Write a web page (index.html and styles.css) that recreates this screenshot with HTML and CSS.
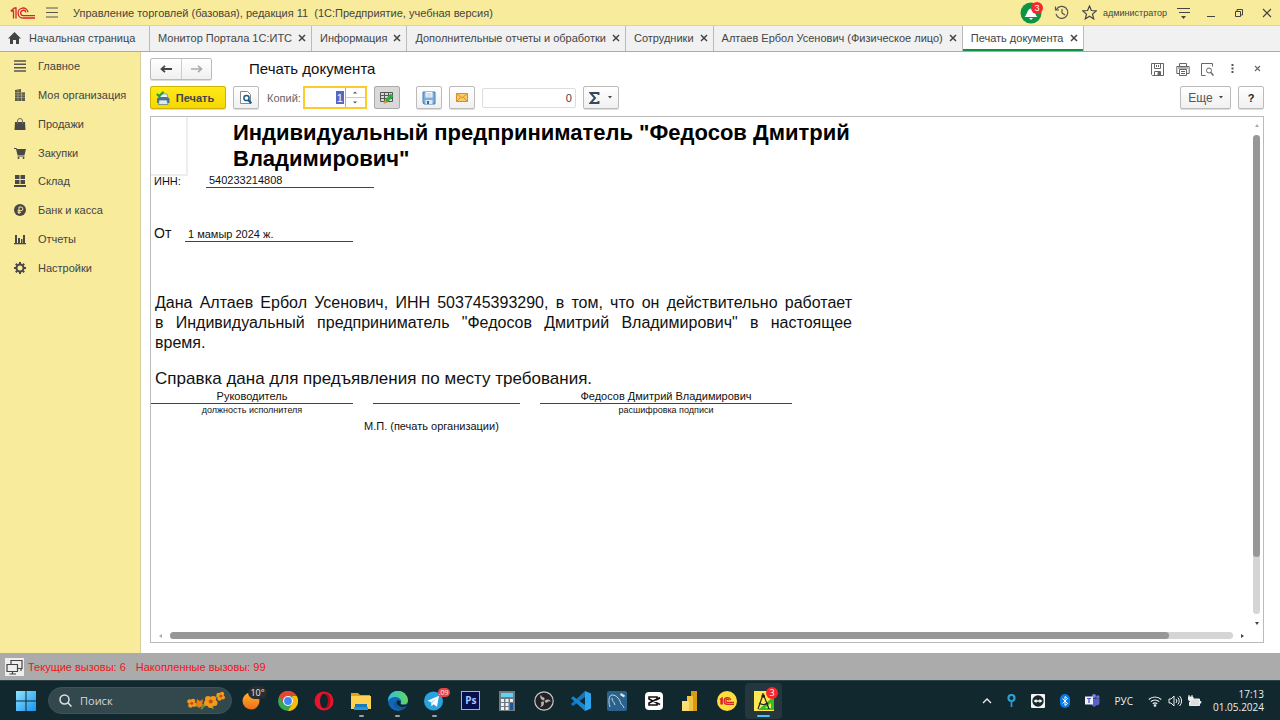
FILE: index.html
```html
<!DOCTYPE html>
<html lang="ru">
<head>
<meta charset="utf-8">
<title>Печать документа</title>
<link rel="stylesheet" href="styles.css">
</head>
<body>
<div class="screen">
  <header class="titlebar">
    <svg class="logo" width="26" height="14" viewBox="0 0 26 14" fill="none" stroke="#d8232a" stroke-width="1.300"><path d="M.8 5 4.500 2H6v10.500M.8 5H3.500v7.500"/><path d="M18 6.200A5 5 0 1 0 13.500 12H25"/><path d="M16 6.400A2.700 2.700 0 1 0 13.500 9.700H25"/></svg>
    <button class="plain burger" aria-label="Меню"><svg width="12" height="11" viewBox="0 0 12 11" stroke="#555" stroke-width="1.200"><path d="M0 1h12M0 5.500h12M0 10h12"/></svg></button>
    <span class="app-name">Управление торговлей (базовая), редакция 11&nbsp; (1С:Предприятие, учебная версия)</span>
    <div class="title-tools">
      <button class="plain bell" aria-label="Оповещения"><svg width="22" height="22" viewBox="0 0 22 22"><circle cx="11" cy="11" r="10.500" fill="#0b9444"/><path d="M4.500 15c2.500-1.500 2.500-8 6.500-8.500 4 .5 4 7 6.500 8.500zM9 16h4l-2 2z" fill="#fff"/></svg><span class="badge">3</span></button>
      <button class="plain" aria-label="История"><svg width="15" height="15" viewBox="0 0 15 15" fill="none" stroke="#555" stroke-width="1.200"><path d="M2.500 4.500A6 6 0 1 1 2 9M1.500 1.500v3.500H5M8 4v4l3 2"/></svg></button>
      <button class="plain" aria-label="Избранное"><svg width="15" height="15" viewBox="0 0 15 15" fill="none" stroke="#444" stroke-width="1.200"><path d="m7.500 1 1.900 4.500 4.800.4-3.700 3.200 1.200 4.800-4.200-2.600-4.200 2.600 1.200-4.800L.8 5.900l4.800-.4z"/></svg></button>
      <span class="user">администратор</span>
      <button class="plain" aria-label="Настройки"><svg width="13" height="12" viewBox="0 0 13 12"><path d="M0 1.500h13M2 5.500h11" stroke="#444" stroke-width="1.200"/><path d="M4 9h5l-2.500 3z" fill="#444"/></svg></button>
      <button class="plain" aria-label="Свернуть"><svg width="12" height="12" viewBox="0 0 12 12" stroke="#444"><path d="M2 9.500h8"/></svg></button>
      <button class="plain" aria-label="Развернуть"><svg width="10" height="10" viewBox="0 0 10 10" fill="none" stroke="#444"><path d="M1.500 3.500h5v5h-5zM3 3V1.500h5.500V7H7"/></svg></button>
      <button class="plain" aria-label="Закрыть"><svg width="10" height="10" viewBox="0 0 10 10" stroke="#444" stroke-width="1.100"><path d="m1 1 8 8M9 1 1 9"/></svg></button>
    </div>
  </header>

  <nav class="tabs">
    <a class="tab home" href="#"><svg width="13" height="12" viewBox="0 0 13 12" fill="#444"><path d="M6.500 0 13 6.500h-2V12H8V8H5v4H2V6.500H0z"/></svg>Начальная страница</a>
    <a class="tab" href="#">Монитор Портала 1С:ИТС<svg class="x" viewBox="0 0 8 8"><path d="m1 1 6 6M7 1 1 7"/></svg></a>
    <a class="tab" href="#">Информация<svg class="x" viewBox="0 0 8 8"><path d="m1 1 6 6M7 1 1 7"/></svg></a>
    <a class="tab" href="#">Дополнительные отчеты и обработки<svg class="x" viewBox="0 0 8 8"><path d="m1 1 6 6M7 1 1 7"/></svg></a>
    <a class="tab" href="#">Сотрудники<svg class="x" viewBox="0 0 8 8"><path d="m1 1 6 6M7 1 1 7"/></svg></a>
    <a class="tab" href="#">Алтаев Ербол Усенович (Физическое лицо)<svg class="x" viewBox="0 0 8 8"><path d="m1 1 6 6M7 1 1 7"/></svg></a>
    <a class="tab active" href="#">Печать документа<svg class="x" viewBox="0 0 8 8"><path d="m1 1 6 6M7 1 1 7"/></svg></a>
  </nav>

  <div class="work">
    <nav class="sidebar">
      <ul class="sections">
        <li><a href="#"><svg viewBox="0 0 12 12" stroke="#555" stroke-width="1.500"><path d="M0 1h12M0 4.300h12M0 7.700h12M0 11h12"/></svg>Главное</a></li>
        <li><a href="#"><svg viewBox="0 0 12 12"><path d="M1 1l6-1v12H1zM7.500 3H11v9H7.500z" fill="#5d5a4c"/><path d="M1 3.500h10M1 6h10M1 8.500h10M4 1v11" stroke="#b5ac7c" stroke-width=".6"/></svg>Моя организация</a></li>
        <li><a href="#"><svg viewBox="0 0 12 12"><path d="M1 4h10l.5 8H.5z" fill="#484848"/><path d="M3.500 6V3a2.500 2.500 0 0 1 5 0v3" fill="none" stroke="#6d6a5c"/></svg>Продажи</a></li>
        <li><a href="#"><svg viewBox="0 0 12 12"><path d="M0 1h2.500l.5 1h9l-1.500 6H3.500L2 2H0z" fill="#484848"/><path d="M3.500 9h7" stroke="#484848"/><circle cx="4.500" cy="11" r="1" fill="#484848"/><circle cx="9.500" cy="11" r="1" fill="#484848"/></svg>Закупки</a></li>
        <li><a href="#"><svg viewBox="0 0 12 12" fill="#484848"><path d="M1 0h4.500v4H1zM6.500 0H11v4H6.500zM1 5h4.500v4H1zM6.500 5H11v4H6.500zM0 10h12v2H0z"/></svg>Склад</a></li>
        <li><a href="#"><svg viewBox="0 0 12 12"><circle cx="6" cy="6" r="6" fill="#484848"/><path d="M5 10V3h2a1.800 1.800 0 0 1 0 3.700H3.500M3.500 8.300H7" fill="none" stroke="#f9eb9c"/></svg>Банк и касса</a></li>
        <li><a href="#"><svg viewBox="0 0 12 12" fill="#484848"><path d="M1 2h2v8H1zM4 5h2v5H4zM7 6h1.500v4H7zM9 2h2v8H9zM0 10h12v1.200H0z"/></svg>Отчеты</a></li>
        <li><a href="#"><svg viewBox="0 0 12 12" fill="none" stroke="#484848"><circle cx="6" cy="6" r="3.500" stroke-width="2"/><path d="M6 0v2M6 10v2M0 6h2M10 6h2M1.800 1.800l1.400 1.400M8.800 8.800l1.400 1.400M1.800 10.200l1.400-1.400M8.800 3.200l1.400-1.400" stroke-width="2"/></svg>Настройки</a></li>
      </ul>
    </nav>

    <main class="content">
      <div class="form-head">
        <div class="history">
          <button aria-label="Назад"><svg width="12" height="8" viewBox="0 0 12 8" fill="none" stroke="#444" stroke-width="1.800"><path d="M12 4H2M5 .8 1.500 4 5 7.200"/></svg></button>
          <button aria-label="Вперед"><svg width="12" height="8" viewBox="0 0 12 8" fill="none" stroke="#aaa" stroke-width="1.600"><path d="M0 4h10M7 .8 10.500 4 7 7.200"/></svg></button>
        </div>
        <h1>Печать документа</h1>
        <div class="head-tools">
          <button class="plain" aria-label="Сохранить"><svg width="13" height="13" viewBox="0 0 13 13" fill="none" stroke="#666"><path d="M.5.5h12v12h-11l-1-1zM3.500.5v5h6v-5M3.500 12.500v-4h6v4M5.500 2v2M7.500 2v2"/><path d="M7 9.500h2V12H7z" fill="#666"/></svg></button>
          <button class="plain" aria-label="Печать"><svg width="14" height="13" viewBox="0 0 14 13" fill="none" stroke="#666"><path d="M3.500 3.500v-3h7v3M3 10.500H.8v-7h12.400v7H11M3.500 6.500h7v6h-7zM5 8.500h4M5 10.500h4M2 5h10"/></svg></button>
          <button class="plain" aria-label="Просмотр"><svg width="13" height="13" viewBox="0 0 13 13" fill="none" stroke="#666"><path d="M4.500 12.500h-4V.5h11v3"/><circle cx="8" cy="7.500" r="2.500"/><path d="m9.800 9.500 2.700 3" stroke-width="1.500"/></svg></button>
          <button class="plain" aria-label="Еще"><svg width="13" height="13" viewBox="0 0 13 13" fill="#555"><path d="M5.500 1h2v2h-2zM5.500 4.500h2v2h-2zM5.500 8h2v2h-2z"/></svg></button>
          <button class="plain" aria-label="Закрыть"><svg width="13" height="13" viewBox="0 0 13 13" stroke="#666" stroke-width="1.200"><path d="m4 3 5 5M9 3 4 8"/></svg></button>
        </div>
      </div>

      <div class="toolbar">
        <button class="btn print"><svg width="14" height="14" viewBox="0 0 14 14"><path d="M4 3h7l1 4H3z" fill="#e8f1f8" stroke="#5b86a8" stroke-width=".7"/><path d="M1 7.500 3 6h8l2.500 1.500V12H1z" fill="#4c7396"/><path d="M3 9h8l1 4.500H2.500z" fill="#dbe9f3" stroke="#426685" stroke-width=".6"/><path d="m.8 3 2.500 2.300L7.500.8" fill="none" stroke="#29a22e" stroke-width="2.200"/></svg>Печать</button>
        <button class="btn square" aria-label="Просмотр"><svg width="12" height="13" viewBox="0 0 12 13" fill="none"><path d="M.5.5h7l3 3v9H.5z" stroke="#888" fill="#fff"/><circle cx="6.500" cy="7" r="2.600" stroke="#155a86" stroke-width="1.500"/><path d="m8.300 9 3 3.300" stroke="#155a86" stroke-width="2"/></svg></button>
        <label class="copies-label" for="copies">Копий:</label>
        <div class="copies">
          <input id="copies" type="text" inputmode="numeric" value="1">
          <div class="spin">
            <button aria-label="Больше"><svg width="4" height="3" viewBox="0 0 4 3" fill="#555"><path d="M0 2.500h4L2 .5z"/></svg></button>
            <button aria-label="Меньше"><svg width="4" height="3" viewBox="0 0 4 3" fill="#555"><path d="M0 .5h4l-2 2z"/></svg></button>
          </div>
        </div>
        <button class="btn square pressed" aria-label="Редактирование"><svg width="14" height="13" viewBox="0 0 14 13" fill="none"><path d="M.5 1.500h12v9H.5zM.5 4.500h12M.5 7.500h12M4.500 1.500v9M8.500 1.500v9" stroke="#555"/><path d="M5 9 10.500 2.500l3 2.500-6 6.500z" fill="#35a847"/><path d="m5 9 2.500 2.500-4 1.500z" fill="#e89538"/></svg></button>
        <button class="btn square gap-left" aria-label="Сохранить"><svg width="14" height="14" viewBox="0 0 14 14"><path d="M1 1h12v12H2l-1-1z" fill="#7baee0" stroke="#4b7eb4"/><path d="M3.500 1h7v5.500h-7z" fill="#f5f9fd"/><path d="M4.500 3h5M4.500 5h5" stroke="#9bb3ca" stroke-width=".7"/><path d="M3.500 9h7v4h-7z" fill="#dce7f0"/><path d="M5 10h2v3H5z" fill="#4b6783"/></svg></button>
        <button class="btn square" aria-label="Отправить"><svg width="12" height="9" viewBox="0 0 12 9"><path d="M.5.5h11v8H.5z" fill="#f8ca68" stroke="#d99021"/><path d="m.5.500 5.500 4.500L11.500.5M.5 8.500l4-4M11.500 8.500l-4-4" fill="none" stroke="#d99021"/></svg></button>
        <input class="total" type="text" value="0" readonly aria-label="Сумма">
        <button class="btn sum" aria-label="Сумма выделенных"><svg width="11" height="12" viewBox="0 0 11 12" fill="none" stroke="#34495e" stroke-width="1.900"><path d="M9.500 3V1H1.500l4.500 5-4.500 5h8V9"/></svg><svg width="4" height="3" viewBox="0 0 4 3" fill="#444"><path d="M0 0h4L2 2.500z"/></svg></button>
        <button class="btn more">Еще<svg width="4" height="3" viewBox="0 0 4 3" fill="#444"><path d="M0 0h4L2 2.500z"/></svg></button>
        <button class="btn square help">?</button>
      </div>

      <div class="viewer">
        <article class="sheet">
          <div class="sheet-head">
            <div class="stamp"></div>
            <h2>Индивидуальный предприниматель "Федосов Дмитрий<br>Владимирович"</h2>
          </div>
          <div class="line inn"><span class="key">ИНН:</span><span class="value">540233214808</span></div>
          <div class="line date"><span class="key">От</span><span class="value">1 мамыр 2024 ж.</span></div>
          <p class="body-text"><span class="full">Дана Алтаев Ербол Усенович, ИНН 503745393290, в том, что он действительно работает</span> <span class="full">в Индивидуальный предприниматель "Федосов Дмитрий Владимирович" в настоящее</span> время.</p>
          <p class="body-text closing">Справка дана для предъявления по месту требования.</p>
          <div class="signs">
            <div><p class="signed">Руководитель</p><small>должность исполнителя</small></div>
            <div><p class="signed"></p></div>
            <div><p class="signed">Федосов Дмитрий Владимирович</p><small>расшифровка подписи</small></div>
          </div>
          <p class="seal">М.П. (печать организации)</p>
        </article>
        <div class="scroll vertical">
          <svg width="4" height="3" viewBox="0 0 4 3" fill="#aaa"><path d="M0 3h4L2 0z"/></svg>
          <div class="track"><div class="thumb"></div></div>
          <svg width="4" height="3" viewBox="0 0 4 3" fill="#444"><path d="M0 0h4L2 3z"/></svg>
        </div>
        <div class="scroll horizontal">
          <svg width="3" height="4" viewBox="0 0 3 4" fill="#aaa"><path d="M3 0v4L0 2z"/></svg>
          <div class="track"><div class="thumb"></div></div>
          <svg width="3" height="4" viewBox="0 0 3 4" fill="#444"><path d="M0 0v4l3-2z"/></svg>
        </div>
      </div>
    </main>
  </div>

  <div class="status">
    <svg width="19" height="18" viewBox="0 0 19 18"><path d="M0 0h19v18H0z" fill="#eee"/><g fill="#eee" stroke="#444" stroke-width="1.200"><path d="M6 2.500h11v8H6zM16 13v-2"/><path d="M2 6.500h10.500v7H2zM7.500 13.500V16M4.500 16H11"/></g></svg>
    <span>Текущие вызовы: 6</span><span>Накопленные вызовы: 99</span>
  </div>

  <footer class="taskbar">
    <button class="plain start" aria-label="Пуск"><svg width="20" height="20" viewBox="0 0 20 20"><defs><linearGradient id="win" x2="1" y2="1"><stop stop-color="#8fe4ff"/><stop offset="1" stop-color="#1593ef"/></linearGradient></defs><path d="M0 0h9.500v9.500H0zM10.500 0H20v9.500h-9.500zM0 10.500h9.500V20H0zM10.500 10.500H20V20h-9.500z" fill="url(#win)"/></svg></button>
    <label class="search">
      <svg width="13" height="13" viewBox="0 0 13 13" fill="none" stroke="#dce2e4" stroke-width="1.500"><circle cx="5.500" cy="5.500" r="4.500"/><path d="m8.800 8.800 3.700 3.700"/></svg>
      <input type="text" placeholder="Поиск" aria-label="Поиск">
      <svg width="38" height="20" viewBox="0 0 38 20"><path d="M5 14c8 3 16-1 28-11M14 18l6-6M24 12l2 6" stroke="#6d8f3a" stroke-width="1.800" fill="none"/><g fill="#f39a1d"><circle cx="2.500" cy="10.500" r="2.300"/><circle cx="6" cy="10" r="2.300"/><circle cx="7" cy="13.500" r="2.300"/><circle cx="3.500" cy="14.500" r="2.300"/><path d="M10 8l3 2 3-2-1 7-3 2-3-3z" fill="#ec7d12"/><circle cx="21" cy="8" r="3"/><circle cx="26" cy="8" r="3"/><circle cx="27.500" cy="12" r="3"/><circle cx="23.500" cy="14" r="3"/><circle cx="20" cy="12" r="3"/><circle cx="31.500" cy="4" r="2.200"/><circle cx="35" cy="3" r="2.200"/><circle cx="36" cy="6.500" r="2"/><circle cx="32.500" cy="7.500" r="2.200"/></g><g fill="#c34c10"><circle cx="4.800" cy="12.200" r="1.500"/><circle cx="23.700" cy="10.500" r="2"/><circle cx="33.800" cy="5.200" r="1.400"/></g></svg>
    </label>
    <div class="apps">
      <button class="plain app" aria-label="Погода"><svg viewBox="0 0 20 20"><defs><linearGradient id="moon" y2="1" x2="0"><stop stop-color="#ffb32c"/><stop offset="1" stop-color="#ef6c19"/></linearGradient></defs><circle cx="10" cy="10" r="8.500" fill="url(#moon)"/></svg><span class="temp">10°</span></button>
      <button class="plain app" aria-label="Chrome"><svg viewBox="0 0 20 20"><circle cx="10" cy="10" r="10" fill="#34a853"/><path d="M1.300 5A10 10 0 0 1 18.700 5H10L5.700 12.500z" fill="#ea4335"/><path d="M18.700 5A10 10 0 0 1 10 20l4.300-7.500V5z" fill="#fbbc04"/><circle cx="10" cy="10" r="5" fill="#fff"/><circle cx="10" cy="10" r="3.900" fill="#4285f4"/></svg></button>
      <button class="plain app" aria-label="Opera"><svg viewBox="0 0 20 20"><circle cx="10" cy="10" r="9.500" fill="#e8142c"/><path d="M10 1a9.500 9.500 0 0 1 0 18c5-2 5-16 0-18" fill="#a60d20"/><ellipse cx="10" cy="10" rx="4" ry="7.300" fill="#10262c"/></svg></button>
      <button class="plain app open" aria-label="Проводник"><svg viewBox="0 0 20 20"><path d="M0 2h7l2 2h10v6H0z" fill="#dca31c"/><path d="M0 5h20v13H0z" fill="#ffd153"/><path d="M4 13h12v6H4z" fill="#167abc"/><path d="M3 16h14v3H3z" fill="#2497df"/></svg></button>
      <button class="plain app open" aria-label="Edge"><svg viewBox="0 0 20 20"><defs><linearGradient id="edge" x2="1"><stop stop-color="#30bde9"/><stop offset="1" stop-color="#61d957"/></linearGradient></defs><circle cx="10" cy="10" r="10" fill="#1167b3"/><path d="M0 10A10 10 0 0 1 20 9.500c0 3-3 4.500-6 4-2-.4-1-1.500-.8-3C13 5 3 4 0 10" fill="url(#edge)"/><path d="M8 10c-2 5 3 9 10 6-1 1-1.500 2-2.500 2.500C9 19 3 14 8 10" fill="#154f91"/><path d="M10 9c-3 2-1 6 3 7 2 .5 4 0 6-1l1 1-1 2c1-1 2-3 1-5-2 1-5 1-7 .5-1-.5-.5-1.500 0-3z" fill="#10262c"/></svg></button>
      <button class="plain app open" aria-label="Telegram"><svg viewBox="0 0 20 20"><circle cx="9.500" cy="10" r="9.500" fill="#29a3df"/><path d="m3.500 9.700 11.500-5-2 11-3.500-2.500-2 2-.5-4z" fill="#fff"/><path d="m7 11 6-4-4.500 5-1 3z" fill="#b9dceb"/></svg><span class="count">.09</span></button>
      <button class="plain app" aria-label="Photoshop"><span class="ps">Ps</span></button>
      <button class="plain app" aria-label="Калькулятор"><svg viewBox="0 0 20 20"><path d="M2 0h16v20H2z" fill="#727b82"/><path d="M4 2h12v4H4z" fill="#61d3f5"/><g fill="#edf1f2"><path d="M4 8h3v3H4zM8.500 8h3v3h-3zM13 8h3v3h-3zM4 12h3v3H4zM8.500 12h3v3h-3zM4 16h3v3H4zM8.500 16h3v3h-3z"/></g><path d="M13 12h3v7h-3z" fill="#195ba2"/></svg></button>
      <button class="plain app" aria-label="OBS"><svg viewBox="0 0 20 20"><circle cx="10" cy="10" r="9.200" fill="#242225" stroke="#c7c7c7" stroke-width="1.200"/><g fill="#b5b5b5"><path id="obs" d="M7 3.500c-1.500 2.500-.5 5 2.500 6 1-.5 1.500-2 .5-3-1.500 0-2.800-1-3-3"/><use href="#obs" transform="rotate(120 10 10)"/><use href="#obs" transform="rotate(240 10 10)"/></g></svg></button>
      <button class="plain app" aria-label="VS Code"><svg viewBox="0 0 20 20"><path d="M14 0v6L2 15l-2-2z" fill="#1576bd"/><path d="M0 7.300l2-2L14 14v6z" fill="#1686d1"/><path d="m14 0 6 2.500v15L14 20z" fill="#2da4ee"/></svg></button>
      <button class="plain app" aria-label="MySQL Workbench"><svg viewBox="0 0 20 20"><rect width="20" height="20" rx="2" fill="#2b628b"/><path d="M3 16C1 10 2 4 5 4c5 0 8 5 9 9 1 1 2 1 3 4M5 7c0 4 2 3 3 7" fill="none" stroke="#c4d7e2"/><path d="m14 2 4 2.500-1 2-4-2.500z" fill="#dde9ef"/></svg></button>
      <button class="plain app" aria-label="CapCut"><svg viewBox="0 0 20 20"><rect x="1" y="1" width="18" height="18" rx="4" fill="#fff"/><path d="M16 7 13 8.500V6H5v2l11 5.500M13 11.500V14H5v-2l11-5.500" fill="none" stroke="#111" stroke-width="1.600"/></svg></button>
      <button class="plain app" aria-label="Power BI"><svg viewBox="0 0 20 20"><path d="M11 0h6v20h-6z" fill="#d99b15"/><path d="M7 5h6v15H7z" fill="#f2c33c"/><path d="M2 10h7v10H2z" fill="#ffde75"/></svg></button>
      <button class="plain app" aria-label="1С"><svg viewBox="0 0 20 20"><circle cx="10" cy="10" r="10" fill="#ffdd3c"/><g fill="none" stroke="#d8232a" stroke-width="1.300"><path d="M3 8.500 5.200 7v6.500M4 8v5.500"/><path d="M13.600 9.200A3.300 3.300 0 1 0 10.500 13.300H17"/><path d="M12 9.400A1.600 1.600 0 1 0 10.500 11.500H17"/></g></svg></button>
      <button class="plain app current" aria-label="1С:Предприятие"><svg viewBox="0 0 20 20"><path d="M0 0h20v20H0z" fill="#ffe951"/><path d="M20 5v14H4z" fill="#39bd25"/><path d="M17 12v5h-6z" fill="#ffe951"/><path d="M9 2v3M8.500 5 4 18M10 5l5 13M5 12c3 2 6 2 9 0" stroke="#222" stroke-width="1.200" fill="none"/><circle cx="9.200" cy="5" r="1.800" fill="#222"/></svg><span class="badge">3</span></button>
    </div>
    <div class="tray">
      <button class="plain" aria-label="Скрытые значки"><svg width="10" height="6" viewBox="0 0 10 6" fill="none" stroke="#eee" stroke-width="1.300"><path d="m1 5 4-4 4 4"/></svg></button>
      <svg width="9" height="13" viewBox="0 0 9 13"><circle cx="4.500" cy="4" r="3" fill="none" stroke="#299fd5" stroke-width="2.200"/><path d="M4.500 7v6" stroke="#299fd5" stroke-width="1.700"/></svg>
      <svg width="14" height="14" viewBox="0 0 14 14"><rect width="14" height="14" rx="1" fill="#f5f5f5"/><circle cx="7" cy="7" r="5.700" fill="#17272c"/><path d="m2.500 7 3-2v1.300h3V5l3 2-3 2V7.700h-3V9z" fill="#fff"/></svg>
      <svg width="10" height="14" viewBox="0 0 10 14"><rect width="10" height="14" rx="5" fill="#087bea"/><path d="m2.500 4.500 5 5L5 11.500v-9l2.500 2-5 5" fill="none" stroke="#fff"/></svg>
      <svg class="teams" width="15" height="13" viewBox="0 0 15 13"><circle cx="12.800" cy="3" r="1.700" fill="#6972d8"/><circle cx="9" cy="2" r="2" fill="#7b83eb"/><path d="M7 4.500h7.500V9c0 2-2 2.500-3 2-1 2.500-4 2-4.500 0z" fill="#5960c7"/><path d="M0 2.500h8v8H0z" fill="#eef"/><path d="M2 4.500h4M4 4.500v4.500" stroke="#4b53bc" stroke-width="1.200"/></svg>
      <span class="lang">РУС</span>
      <div class="devices">
        <svg width="14" height="12" viewBox="0 0 14 12" fill="none" stroke="#eee" stroke-width="1.100"><path d="M.8 4.500a9 9 0 0 1 12.400 0M2.800 6.700a6 6 0 0 1 8.400 0M4.800 8.800a3 3 0 0 1 4.400 0"/><circle cx="7" cy="10.500" r=".8" fill="#eee"/></svg>
        <svg width="14" height="12" viewBox="0 0 14 12" fill="none" stroke="#eee"><path d="M1 4h2l3-3v10L3 8H1zM8 4a3 3 0 0 1 0 4M9.800 2.500a5 5 0 0 1 0 7M11.500 1a7 7 0 0 1 0 10"/></svg>
        <svg width="14" height="12" viewBox="0 0 14 12"><path d="M4 4h7.500v6.500H1.500V7" fill="#ddd" stroke="#eee"/><path d="M12.500 6v2.500" stroke="#eee" stroke-width="1.500"/><path d="M1 0v2M4 0v2M0 2h5v2.500L3 6H2L0 4.500zM2.500 6v3" fill="#eee" stroke="#eee"/></svg>
      </div>
      <div class="clock"><span>17:13</span><span>01.05.2024</span></div>
    </div>
  </footer>
</div>
</body>
</html>
```
FILE: styles.css
```css
* { box-sizing: border-box; }
body {
  margin: 0;
  font: 11px/14px "Liberation Sans", Arial, sans-serif;
  color: #444;
  background: #fff;
}
button, input { font: inherit; color: inherit; }
button { padding: 0; cursor: pointer; }
svg { display: block; flex: none; }
a { color: inherit; text-decoration: none; }
h1, h2, p, ul { margin: 0; padding: 0; }
ul { list-style: none; }

.screen { display: flex; flex-direction: column; min-height: 100vh; }
.plain {
  display: flex;
  align-items: center;
  justify-content: center;
  border: 0;
  background: none;
}

/* Title bar */
.titlebar {
  display: flex;
  align-items: center;
  height: 25px;
  padding: 0 4px 0 10px;
  background: #f9eb9c;
}
.burger { margin: 0 15px 0 10px; }
.title-tools { display: flex; align-items: center; gap: 10px; margin-left: auto; }
.title-tools .plain { min-width: 18px; }
.bell { position: relative; }
.user { margin: 0 -3px 0 -5px; font-size: 9px; }
.badge {
  position: absolute;
  top: 0;
  right: -1px;
  width: 12px;
  height: 12px;
  border-radius: 6px;
  background: #f4292f;
  color: #fff;
  font-size: 9px;
  line-height: 12px;
  text-align: center;
}

/* Tabs */
.tabs {
  display: flex;
  height: 27px;
  background: #f1f1f1;
  border-top: 1px solid #ddd3a0;
  border-bottom: 1px solid #aaa;
}
.tab {
  display: flex;
  align-items: center;
  gap: 6px;
  padding: 0 5px 2px 8px;
  border-right: 1px solid #bbb;
  white-space: nowrap;
}
.tab.home { width: 150px; gap: 8px; }
.tab.active { background: #fff; box-shadow: inset 0 -2px #0b9444; }
.x { width: 8px; height: 8px; fill: none; stroke: #444; stroke-width: 1.5; }

/* Work area */
.work { display: flex; flex: 1; }
.sidebar {
  width: 141px;
  background: #f9eb9c;
  border-right: 1px solid #d8cf9e;
}
.sections { display: grid; grid-auto-rows: 1fr; height: 230px; }
.sections a { display: flex; align-items: center; gap: 12px; height: 100%; padding-left: 14px; }
.sections svg { width: 12px; height: 12px; }

.content { display: flex; flex: 1; flex-direction: column; min-width: 0; padding: 6px 16px 10px 9px; }
.form-head { display: flex; align-items: center; height: 22px; margin-bottom: 6px; }
.form-head h1 { margin-left: 37px; font-size: 15px; font-weight: 400; line-height: 20px; color: #111; }
.history {
  display: flex;
  height: 22px;
  border: 1px solid #bbb;
  border-radius: 2px;
  background: linear-gradient(#fff, #f0f0f0);
  box-shadow: 0 1px #ddd;
}
.history button { display: flex; align-items: center; justify-content: center; width: 30px; border: 0; background: none; }
.history button + button { border-left: 1px solid #ccc; }
.head-tools { display: flex; gap: 12px; margin-left: auto; }
.head-tools .plain { width: 13px; }

.toolbar { display: flex; align-items: center; gap: 7px; height: 23px; margin-bottom: 7px; }
.btn {
  display: flex;
  align-items: center;
  justify-content: center;
  height: 23px;
  border: 1px solid #bbb;
  border-radius: 2px;
  background: linear-gradient(#fff, #f0f0f0);
  box-shadow: 0 1px #ddd;
}
.square { width: 26px; }
.print {
  gap: 6px;
  width: 76px;
  padding-right: 6px;
  border-color: #d0b000;
  background: linear-gradient(#ffea1a, #f6d800);
  font-weight: 700;
}
.pressed { background: #d9d9d9; border-color: #aaa; box-shadow: none; }
.gap-left { margin-left: 9px; }
.copies-label { margin-left: 1px; color: #666; }
.copies { display: flex; width: 64px; height: 23px; margin-left: -5px; border: 2px solid #fdcb2c; background: #fff; }
.copies input {
  flex: 1;
  min-width: 0;
  padding: 0 1px;
  border: 0;
  outline: 0;
  color: #fff;
  text-align: right;
  background: linear-gradient(#5468c4, #5468c4) right center / 8px 13px no-repeat;
}
.spin { display: flex; flex-direction: column; width: 20px; margin-left: 1px; border-left: 1px solid #aaa; }
.spin button { display: flex; flex: 1; align-items: center; justify-content: center; border: 0; background: none; }
.spin button + button { border-top: 1px solid #ccc; }
.total {
  width: 94px;
  height: 20px;
  padding: 0 3px;
  border: 1px solid #ddd;
  border-radius: 2px;
  outline: 0;
  text-align: right;
}
.sum { gap: 8px; width: 36px; }
.more { gap: 6px; width: 51px; margin-left: auto; font-size: 12px; color: #555; }
.help { color: #222; font-weight: 700; }

/* Document viewer */
.viewer {
  display: grid;
  flex: 1;
  grid-template: 1fr 13px / 1fr 13px;
  border: 1px solid #bbb;
}
.sheet { width: 702px; color: #111; }
.sheet-head { display: flex; gap: 45px; height: 57px; }
.stamp { width: 37px; height: 59px; border: solid #eee; border-width: 0 2px 2px 0; }
.sheet h2 { flex: 1; padding-top: 3px; font-size: 22px; line-height: 26px; color: #000; }
.line { display: flex; align-items: flex-end; padding-left: 3px; }
.line .value { width: 168px; padding-left: 3px; border-bottom: 1px solid #444; }
.inn { height: 14px; }
.inn .key { width: 52px; }
.date { height: 54px; }
.date .key { width: 31px; font-size: 14px; line-height: 18px; }
.body-text { margin-top: 51px; padding: 0 1px 0 4px; font-size: 16px; line-height: 20px; }
.body-text .full { display: block; text-align: justify; text-align-last: justify; }
.body-text.closing { margin-top: 16px; font-size: 17px; }
.signs {
  display: grid;
  grid-template-columns: 202px 147px 252px;
  column-gap: 20px;
  text-align: center;
}
.signed { height: 15px; border-bottom: 1px solid #444; }
.signs small { display: block; font-size: 9px; line-height: 12px; }
.seal { padding: 3px 0 0 213px; }

.scroll { display: flex; align-items: center; gap: 8px; }
.vertical { flex-direction: column; padding: 7px 0 4px; }
.horizontal { padding: 0 6px 0 8px; }
.track { flex: 1; border-radius: 4px; background: #d5d5d5; }
.thumb { border-radius: 4px; background: #979797; }
.vertical .track { width: 7px; }
.vertical .thumb { width: 7px; height: 88%; }
.horizontal .track { height: 7px; }
.horizontal .thumb { height: 7px; width: 94%; }

/* Call counters */
.status {
  display: flex;
  align-items: center;
  gap: 4px;
  height: 27px;
  padding-left: 5px;
  background: #ababab;
  color: #f0141c;
}
.status span + span { margin-left: 6px; }

/* Taskbar */
.taskbar {
  display: flex;
  align-items: center;
  height: 40px;
  padding: 0 16px;
  background: #10282e;
  border-top: 1px solid #2c4247;
  color: #eee;
  font-family: "Open Sans", "Noto Sans", sans-serif;
}
.start { margin-right: 12px; }
.search {
  display: flex;
  align-items: center;
  gap: 8px;
  width: 184px;
  height: 27px;
  padding: 0 6px 0 10px;
  border: 1px solid #3f5459;
  border-radius: 14px;
  background: #33484d;
}
.search input { flex: 1; min-width: 0; padding: 0; border: 0; outline: 0; background: none; font-size: 11px; }
.search input::placeholder { color: #d3dadc; opacity: 1; }
.apps { display: grid; grid-template-columns: repeat(15, 1fr); width: 549px; margin-left: 1px; }
.app { position: relative; height: 36px; }
.app svg { width: 20px; height: 20px; }
.app .badge { top: 4px; right: 4px; }
.open::after, .current::after {
  content: "";
  position: absolute;
  bottom: 2px;
  width: 5px;
  height: 2px;
  border-radius: 1px;
  background: #98a2a5;
}
.current { border-radius: 4px; background: #24373c; }
.current::after { width: 13px; background: #4cc2f5; }
.temp {
  position: absolute;
  top: 3px;
  right: 3px;
  padding: 0 2px;
  border-radius: 7px;
  background: #2a2d2f;
  font-size: 9px;
  line-height: 13px;
}
.count {
  position: absolute;
  top: 5px;
  right: 3px;
  padding: 0 1px;
  border-radius: 5px;
  background: #ed4245;
  font-size: 7px;
  line-height: 9px;
}
.ps {
  width: 19px;
  height: 19px;
  border: 1px solid #8bb5ff;
  background: #07104f;
  color: #a5c8ff;
  font-size: 10px;
  font-weight: 700;
  line-height: 17px;
}
.tray { display: flex; align-items: center; gap: 15px; margin-left: auto; }
.lang { font-size: 10px; }
.devices { display: flex; gap: 6px; }
.clock { display: flex; flex-direction: column; align-items: flex-end; margin-left: -4px; font-size: 10px; line-height: 13px; }
```
